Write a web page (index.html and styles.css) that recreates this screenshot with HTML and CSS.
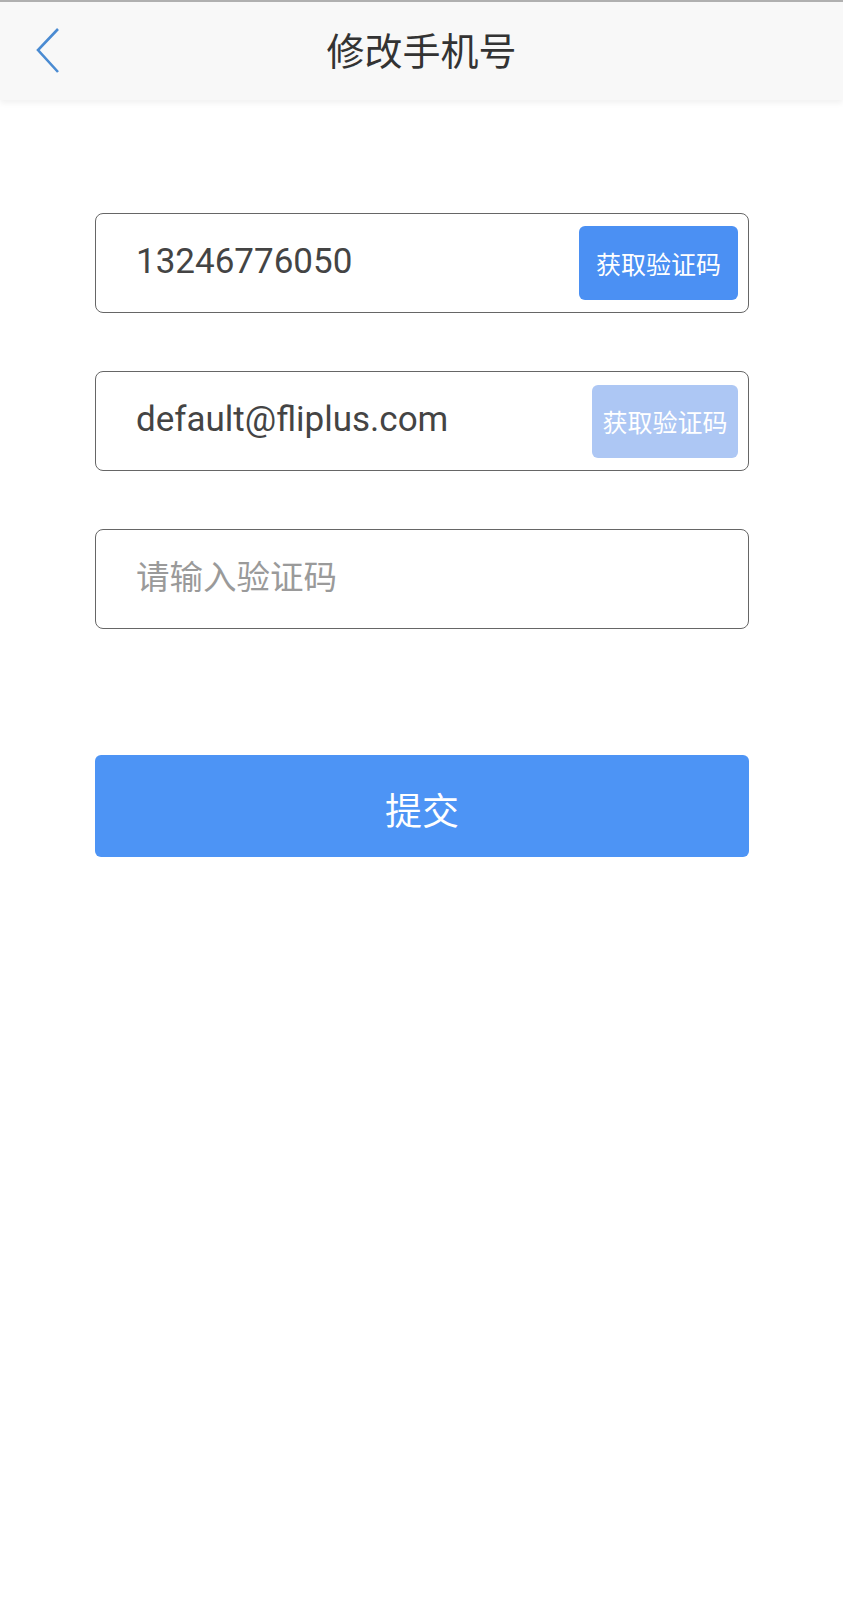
FILE: index.html
```html
<!DOCTYPE html>
<html lang="zh-CN">
<head>
    <meta charset="UTF-8">
    <meta name="viewport" content="width=device-width, initial-scale=1.0">
    <title>修改手机号</title>
    <link rel="stylesheet" href="styles.css">
</head>
<body>
    <header class="topbar">
        <button class="back" aria-label="返回">
            <svg width="30" height="50" viewBox="0 0 30 50">
                <polyline points="22,3 2,24 22,46" fill="none" stroke="#4a8bd2" stroke-width="2.6" stroke-linejoin="miter"/>
            </svg>
        </button>
        <h1>修改手机号</h1>
    </header>

    <main class="form">
        <div class="field">
            <input type="text" value="13246776050">
            <button class="code-btn">获取验证码</button>
        </div>
        <div class="field">
            <input type="text" value="default@fliplus.com">
            <button class="code-btn disabled" disabled>获取验证码</button>
        </div>
        <div class="field">
            <input type="text" placeholder="请输入验证码">
        </div>
        <button class="submit">提交</button>
    </main>
</body>
</html>
```

FILE: styles.css
```css
* {
    box-sizing: border-box;
}
body {
    margin: 0;
    background: #fff;
    font-family: Roboto, "Noto Sans CJK SC", sans-serif;
    color: #444;
}
.topbar {
    position: relative;
    height: 100px;
    background: #f8f8f8;
    border-top: 2px solid #b0b0b0;
    box-shadow: 0 3px 6px rgba(0,0,0,0.06);
    display: flex;
    align-items: center;
    justify-content: center;
    padding-bottom: 6px;
}
.topbar h1 {
    margin: 0;
    font-family: "Noto Sans CJK SC", sans-serif;
    font-size: 38px;
    font-weight: 400;
    color: #333;
}
.back {
    position: absolute;
    left: 36px;
    top: 24px;
    padding: 0;
    border: none;
    background: none;
    cursor: pointer;
}
.form {
    padding: 113px 94px 0 95px;
    display: flex;
    flex-direction: column;
    gap: 58px;
}
.field {
    height: 100px;
    border: 1px solid #666;
    border-radius: 8px;
    display: flex;
    align-items: center;
    padding: 0 10px 0 40px;
}
.field input {
    flex: 1;
    min-width: 0;
    border: none;
    outline: none;
    padding: 0 0 3px;
    font-family: Roboto, "Noto Sans CJK SC", sans-serif;
    font-size: 35px;
    color: #444;
    background: transparent;
}
.field input::placeholder {
    font-family: "Noto Sans CJK SC", sans-serif;
    font-size: 33.5px;
    color: #9a9a9a;
}
.code-btn {
    width: 159px;
    height: 74px;
    border: none;
    border-radius: 6px;
    background: #4b90f3;
    color: #fff;
    font-family: "Noto Sans CJK SC", sans-serif;
    font-size: 25px;
    padding: 0;
    cursor: pointer;
}
.code-btn.disabled {
    width: 146px;
    height: 73px;
    background: #adc7f4;
    cursor: default;
}
.submit {
    margin-top: 68px;
    height: 102px;
    border: none;
    border-radius: 6px;
    background: #4d94f5;
    color: #fff;
    font-family: "Noto Sans CJK SC", sans-serif;
    font-size: 37px;
    padding: 6px 0 0;
    cursor: pointer;
}
```
